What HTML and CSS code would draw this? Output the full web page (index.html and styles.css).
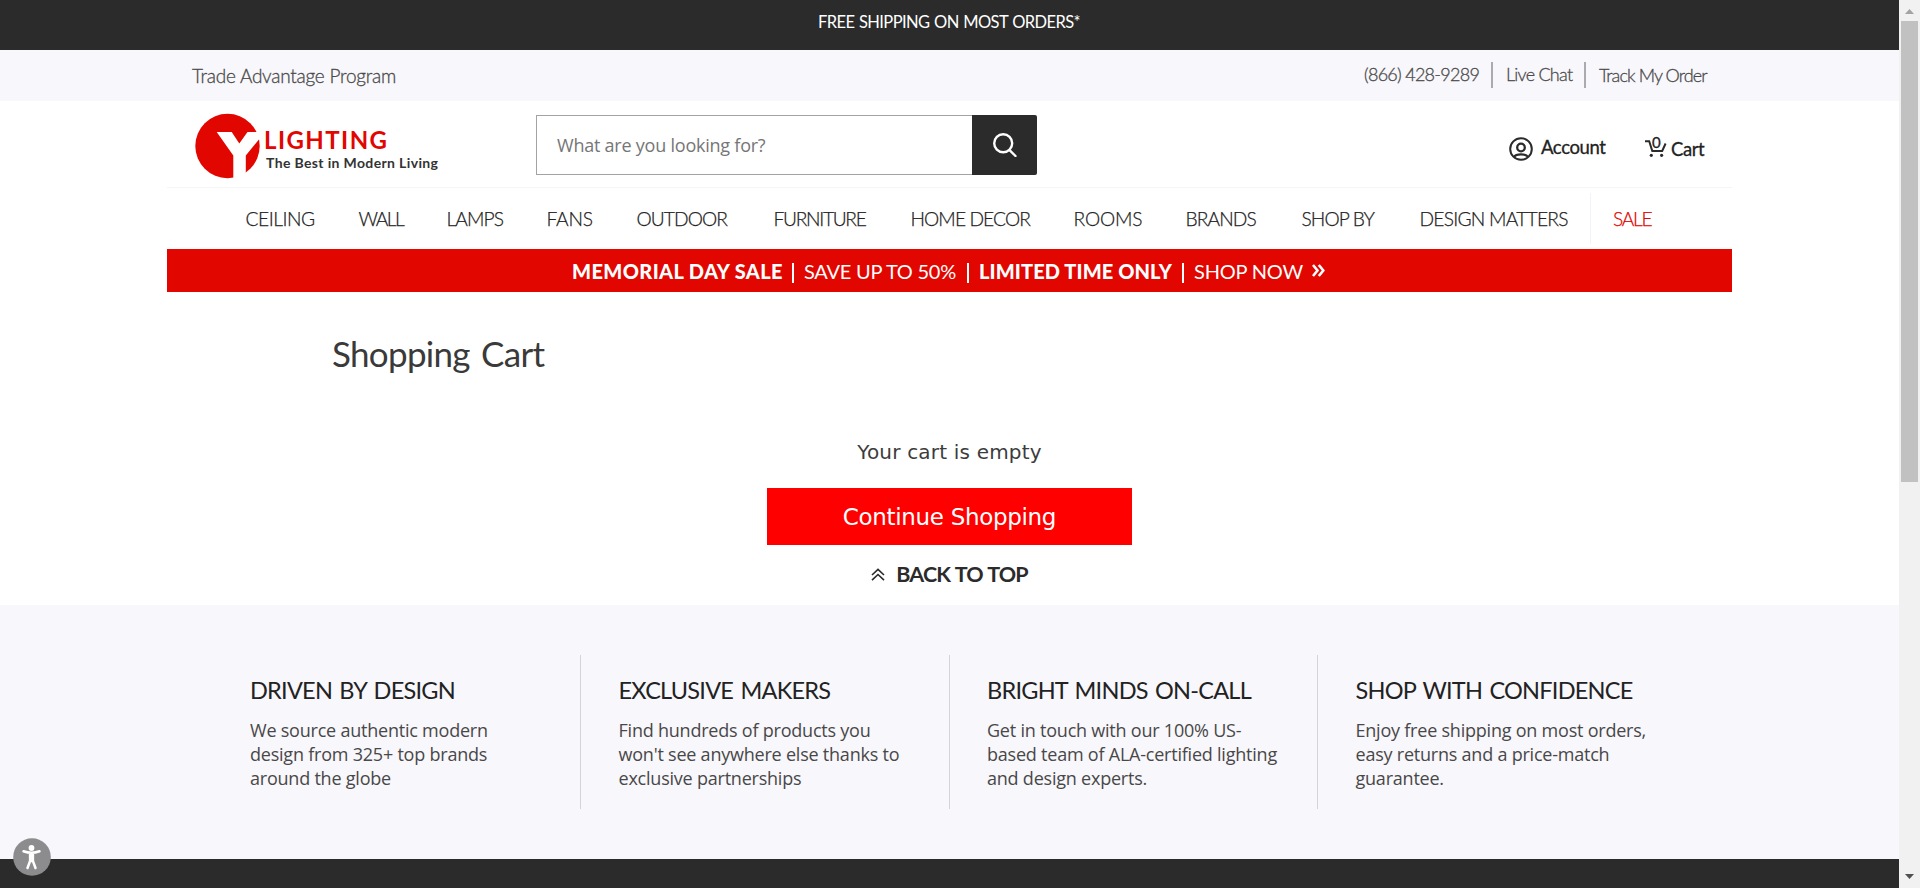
FILE: index.html
```html
<!DOCTYPE html>
<html lang="en">
<head>
<meta charset="utf-8">
<title>Shopping Cart | YLighting</title>
<link rel="stylesheet" href="styles.css">
</head>
<body>
<div class="page">
  <div class="promo">FREE SHIPPING ON MOST ORDERS*</div>
  <div class="utility">
    <a class="trade">Trade Advantage Program</a>
    <a class="phone">(866) 428-9289</a>
    <a class="chat">Live Chat</a>
    <a class="track">Track My Order</a>
  </div>
  <header class="header">
    <svg class="logo" width="248" height="66" viewBox="194 113 248 66">
      <circle cx="227.5" cy="146" r="32.2" fill="#e20600"/>
      <path d="M216.7 132h15l7.6 11.4 8.2-11.4H265L245.8 155.5V180H233.3V155.5Z" fill="#fff"/>
      <text class="logo-name" x="264" y="149" textLength="123">LIGHTING</text>
      <text class="logo-tag" x="266" y="167.500" textLength="172">The Best in Modern Living</text>
    </svg>
    <div class="search">
      <div class="search-field">What are you looking for?</div>
      <div class="search-button">
        <svg width="24" height="24" viewBox="0 0 24 24" fill="none" stroke="#fff" stroke-width="2.4" stroke-linecap="round"><circle cx="10.2" cy="10.2" r="9"/><path d="M16.8 17.4 22.5 23"/></svg>
      </div>
    </div>
    <a class="account">
      <svg width="24" height="24" viewBox="0 0 24 24" fill="none" stroke="#2b2b2b" stroke-width="2"><circle cx="12" cy="12" r="10.8"/><circle cx="12" cy="10.5" r="3.8" stroke-width="2.3"/><path d="M5 20c2-3.4 12-3.4 14 0" stroke-width="2.2"/></svg>
      <span>Account</span>
    </a>
    <a class="cart">
      <svg width="22" height="22" viewBox="0 0 22 22" fill="none" stroke="#2b2b2b" stroke-width="2"><path d="M0 4.3h4.2L7.300 14h9.900l3.400-7.500"/><circle cx="6.300" cy="18.300" r="1.600" fill="#2b2b2b" stroke="none"/><circle cx="16.600" cy="18.300" r="1.600" fill="#2b2b2b" stroke="none"/></svg>
      <span class="cart-count">0</span>
      <span>Cart</span>
    </a>
  </header>
  <nav class="nav">
    <a>CEILING</a><a>WALL</a><a>LAMPS</a><a>FANS</a><a>OUTDOOR</a><a>FURNITURE</a><a>HOME DECOR</a><a>ROOMS</a><a>BRANDS</a><a>SHOP BY</a><a>DESIGN MATTERS</a><a class="sale">SALE</a>
  </nav>
  <div class="banner">
    <b class="memorial">MEMORIAL DAY SALE</b><i></i><span class="save">SAVE UP TO 50%</span><i></i><b class="limited">LIMITED TIME ONLY</b><i></i><span class="shop">SHOP NOW</span>
    <svg width="13" height="13" viewBox="0 0 13 13" fill="none" stroke="#fff" stroke-width="2.600"><path d="M1 1l4.500 5.500L1 12M6.800 1l4.500 5.500L6.800 12"/></svg>
  </div>
  <main class="main">
    <h1>Shopping Cart</h1>
    <p class="empty">Your cart is empty</p>
    <a class="continue">Continue Shopping</a>
    <a class="top">
      <svg width="14" height="13" viewBox="0 0 14 13" fill="none" stroke="#2b2b2b" stroke-width="1.600"><path d="M1 7l6-5.700L13 7M1 12.200l6-5.700 6 5.700"/></svg>
      <span>BACK TO TOP</span>
    </a>
  </main>
  <section class="values">
    <div class="value"><h2>DRIVEN BY DESIGN</h2><p>We source authentic modern<br>design from 325+ top brands<br>around the globe</p></div>
    <div class="value"><h2>EXCLUSIVE MAKERS</h2><p>Find hundreds of products you<br>won't see anywhere else thanks to<br>exclusive partnerships</p></div>
    <div class="value"><h2>BRIGHT MINDS ON-CALL</h2><p>Get in touch with our 100% US-<br>based team of ALA-certified lighting<br>and design experts.</p></div>
    <div class="value"><h2>SHOP WITH CONFIDENCE</h2><p>Enjoy free shipping on most orders,<br>easy returns and a price-match<br>guarantee.</p></div>
  </section>
  <footer class="footer"></footer>
</div>
<div class="scrollbar">
  <svg class="arrow" width="9" height="5" viewBox="0 0 9 5"><path d="M0 5 4.500 0 9 5z" fill="#a3a3a3"/></svg>
  <div class="thumb"></div>
  <svg class="arrow down" width="9" height="5" viewBox="0 0 9 5"><path d="M0 0h9L4.500 5z" fill="#505050"/></svg>
</div>
<div class="access">
  <svg width="38" height="38" viewBox="0 0 38 38"><circle cx="19" cy="19" r="18.800" fill="#8c8c8e"/><circle cx="18.500" cy="10" r="2.900" fill="#fff"/><path d="M10.500 13.300c5 1.800 11 1.800 16 0M18.500 15v8M17.100 15.500v7.500L14.500 30M19.900 15.500v7.500L22.500 30" fill="none" stroke="#fff" stroke-width="2.500" stroke-linecap="round"/></svg>
</div>
</body>
</html>
```
FILE: styles.css
```css
* { box-sizing: border-box; }
body { margin: 0; height: 888px; overflow: hidden; display: flex; background: #fff; color: #2b2b2b; font-family: Lato, sans-serif; white-space: nowrap; }
h1, h2, p { margin: 0; font-weight: 400; }
.page { width: 1899px; display: flex; flex-direction: column; }
.promo { height: 50px; padding-left: 818px; background: #2b2b2b; color: #fff; font-size: 16.5px; line-height: 45px; letter-spacing: -0.6px; word-spacing: 1px; }

.utility { height: 51px; padding: 0 192px; display: flex; background: #f8f7fc; color: #4a4a4a; font-size: 18px; font-weight: 300; -webkit-text-stroke: 0.3px #4a4a4a; }
.trade { margin-right: auto; font-size: 19px; line-height: 52px; letter-spacing: -0.24px; }
.phone { width: 129px; letter-spacing: -0.72px; }
.chat { width: 93px; padding-left: 13px; letter-spacing: -0.75px; }
.phone, .chat { height: 26px; margin-top: 12px; line-height: 25px; border-right: 2px solid #aaaab0; }
.track { width: 121px; padding-left: 13px; line-height: 51px; letter-spacing: -0.9px; }

.header { height: 87px; margin: 0 167px; display: flex; border-bottom: 1px solid #f5f5f8; }
.logo { margin: 12px 0 0 27px; flex: none; }
.logo-name { font-size: 24px; font-weight: 700; fill: #e20600; }
.logo-tag { font-size: 14px; font-weight: 700; fill: #333; }
.search { width: 501px; height: 60px; margin: 14px 0 0 94px; display: flex; }
.search-field { width: 436px; padding-left: 20px; border: 1px solid #a3a3a3; border-right: 0; color: #767676; font: 18px/59px "Open Sans", sans-serif; letter-spacing: -0.23px; }
.search-button { width: 65px; display: flex; align-items: center; justify-content: center; background: #2b2b2b; border-radius: 0 2px 2px 0; }
.account, .cart { display: flex; font-size: 18.5px; font-weight: 400; color: #222; -webkit-text-stroke: 0.3px #222; }
.account { width: 136px; margin-left: 472px; letter-spacing: -0.4px; line-height: 93px; }
.account svg { margin: 36px 8px 0 0; }
.cart { position: relative; line-height: 97px; letter-spacing: -0.4px; }
.cart svg { margin: 36px 4px 0 0; }
.cart-count { position: absolute; left: 7px; top: 35px; font-size: 15px; line-height: 12px; }

.nav { height: 61px; padding-left: 245.5px; display: grid; grid-template-columns: 113px 88px 100px 90px 137px 137px 163px 112px 116px 118px 170.5px 90px; font-size: 19.2px; font-weight: 300; line-height: 61px; color: #222; letter-spacing: -0.9px; -webkit-text-stroke: 0.25px #222; }
.nav a:nth-child(1) { letter-spacing: -0.45px; }
.nav a:nth-child(2) { letter-spacing: -1.5px; }
.nav a:nth-child(4), .nav a:nth-child(8) { letter-spacing: -0.15px; }
.nav a:nth-child(6) { letter-spacing: -1.3px; }
.nav a:nth-child(11) { letter-spacing: -0.75px; }
.nav .sale { height: 51px; margin-top: 5px; padding-left: 22px; line-height: 51px; border-left: 1px solid #f3f2fa; color: #e20600; letter-spacing: -1.3px; -webkit-text-stroke-color: #e20600; }

.banner { height: 43px; margin: 0 167px; padding-left: 405px; display: flex; background: #e20600; color: #fff; font-size: 20px; line-height: 44px; }
.banner b { font-weight: 900; }
.banner i { width: 2px; height: 20px; margin: 14px 10px 0 10px; background: #fff; }
.memorial { width: 210px; letter-spacing: 0.38px; }
.save { width: 153px; letter-spacing: -0.25px; }
.limited { width: 193px; letter-spacing: 0.1px; }
.shop { width: 109px; letter-spacing: -0.2px; }
.banner svg { margin: 15px 0 0 9px; }

.main { height: 313px; padding-top: 40px; display: flex; flex-direction: column; align-items: center; }
.main h1 { align-self: flex-start; margin-left: 332px; font-size: 35px; line-height: 43px; letter-spacing: -0.7px; word-spacing: 3px; color: #3a3a3a; }
.empty { margin-top: 65px; font: 20px/24px "DejaVu Sans", sans-serif; letter-spacing: 0.19px; color: #3c3c3c; }
.continue { width: 365px; height: 57px; margin-top: 24px; text-align: center; background: #f00; color: #fff; font: 23px/58px "DejaVu Sans", sans-serif; letter-spacing: -0.32px; }
.top { margin-top: 15px; display: flex; gap: 11px; font-size: 21.5px; font-weight: 700; line-height: 28px; letter-spacing: -0.9px; word-spacing: 1px; }
.top svg { margin-top: 8px; }

.values { height: 254px; padding: 50px 0 0 212.5px; display: flex; background: #f8f7fc; }
.value { width: 368.5px; height: 154px; padding: 20px 0 0 37.5px; border-right: 1px solid #d5d4da; }
.value:last-child { border: 0; }
.value h2 { font-size: 23.5px; line-height: 31px; letter-spacing: -0.75px; word-spacing: 2px; color: #222; }
.value p { margin-top: 12px; font: 18px/24px "Open Sans", sans-serif; letter-spacing: -0.22px; color: #484848; }
.footer { height: 29px; background: #2b2b2b; }

.scrollbar { width: 21px; display: flex; flex-direction: column; background: #f1f1f1; }
.arrow { margin: 9px 0 7px 6px; }
.thumb { width: 17px; height: 461px; margin-left: 2px; background: #c1c1c1; }
.down { margin-top: auto; margin-bottom: 9px; }
.access { position: absolute; left: 13px; top: 838px; }
```
